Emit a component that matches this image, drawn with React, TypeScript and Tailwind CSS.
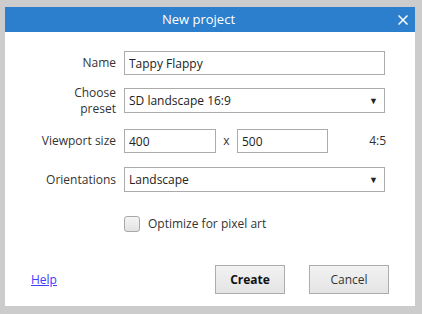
export default function App() {
    return (
        <div className="w-[422px] h-[314px] bg-[#cccccc] pt-[7px] pl-[5px] font-['Open_Sans',sans-serif] text-[12px] text-[#333333]">
            <div className="w-[410px] h-[299px] bg-white flex flex-col">
                {/* title bar */}
                <div className="h-[25px] bg-[#2b7fcc] flex items-center text-white">
                    <div className="flex-1 text-center text-[13px] pl-[2px]">New project</div>
                    <div className="w-[25px] flex items-center justify-center">
                        <svg width="10" height="10" viewBox="0 0 10 10" stroke="white" strokeWidth="1.5">
                            <path d="M0.5 0.5 L9.5 9.5 M9.5 0.5 L0.5 9.5" />
                        </svg>
                    </div>
                </div>

                <div className="flex flex-col pt-[19px]">
                    <div className="flex items-center gap-[8px] h-[24px]">
                        <label className="w-[111px] text-right">Name</label>
                        <input
                            defaultValue="Tappy Flappy"
                            className="w-[261px] h-[24px] border border-[#ababab] px-[4px] outline-none text-[#222222]"
                        />
                    </div>

                    <div className="flex items-center gap-[8px] mt-[13px] h-[25px]">
                        <label className="w-[111px] text-right leading-[16px] mt-[1px]">
                            Choose
                            <br />
                            preset
                        </label>
                        <div className="w-[261px] h-[25px] border border-[#ababab] px-[4px] flex items-center justify-between text-[#222222]">
                            <span>SD landscape 16:9</span>
                            <span className="text-[9px] pr-[2px]">▼</span>
                        </div>
                    </div>

                    <div className="flex items-center mt-[16px] h-[24px]">
                        <label className="w-[111px] mr-[8px] text-right">Viewport size</label>
                        <input
                            defaultValue="400"
                            className="w-[92px] h-[24px] border border-[#ababab] px-[4px] outline-none text-[#222222]"
                        />
                        <span className="w-[21px] text-center">x</span>
                        <input
                            defaultValue="500"
                            className="w-[91px] h-[24px] border border-[#ababab] px-[4px] outline-none text-[#222222]"
                        />
                        <span className="flex-1 text-right pr-[29px]">4:5</span>
                    </div>

                    <div className="flex items-center gap-[8px] mt-[14px] h-[25px]">
                        <label className="w-[111px] text-right">Orientations</label>
                        <div className="w-[261px] h-[25px] border border-[#ababab] px-[4px] flex items-center justify-between text-[#222222]">
                            <span>Landscape</span>
                            <span className="text-[9px] pr-[2px]">▼</span>
                        </div>
                    </div>

                    <div className="flex items-center gap-[8px] mt-[23px] pl-[119px]">
                        <div className="w-[16px] h-[16px] rounded-[3px] border border-[#a8a8a8] bg-gradient-to-b from-[#f4f4f4] to-[#e2e2e2]" />
                        <span>Optimize for pixel art</span>
                    </div>
                </div>

                <div className="flex items-center mt-auto mb-[12px] pl-[26px] pr-[26px]">
                    <a href="#" className="text-[#4040ff] underline">Help</a>
                    <div className="flex-1" />
                    <button className="w-[70px] h-[29px] border border-[#acacac] bg-gradient-to-b from-[#f2f2f2] to-[#e4e4e4] font-bold text-[#111111]">
                        Create
                    </button>
                    <button className="w-[80px] h-[29px] ml-[24px] border border-[#acacac] bg-gradient-to-b from-[#f2f2f2] to-[#e4e4e4] text-[#333333]">
                        Cancel
                    </button>
                </div>
            </div>
        </div>
    );
}
